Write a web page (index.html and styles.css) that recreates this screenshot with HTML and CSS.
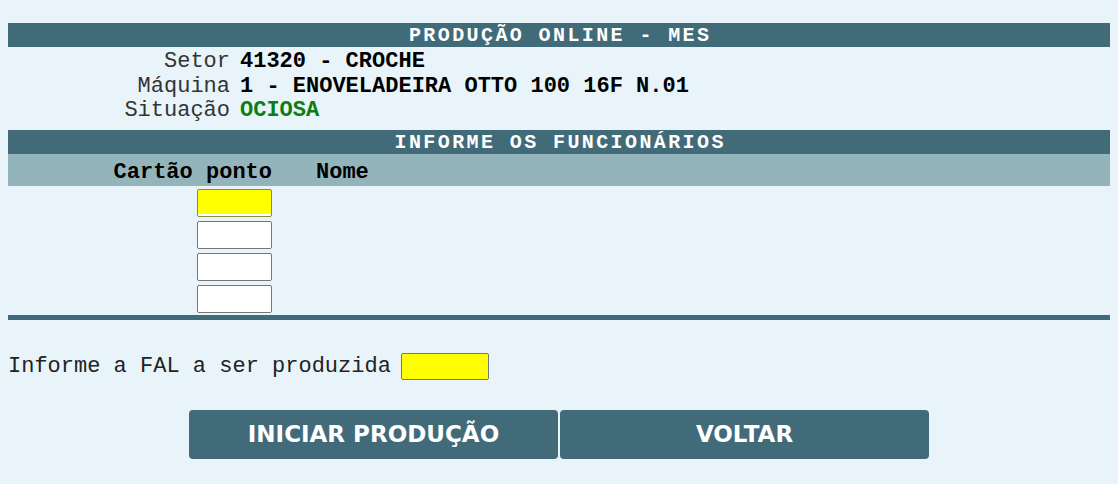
FILE: index.html
```html
<!DOCTYPE html>
<html lang="pt-BR">
<head>
<meta charset="utf-8">
<title>Produção Online - MES</title>
<link rel="stylesheet" href="styles.css">
</head>
<body>
<div class="page">
  <div class="bar">PRODUÇÃO ONLINE - MES</div>
  <div class="info">
    <div class="label">Setor</div><div class="value">41320 - CROCHE</div>
    <div class="label">Máquina</div><div class="value">1 - ENOVELADEIRA OTTO 100 16F N.01</div>
    <div class="label">Situação</div><div class="value status">OCIOSA</div>
  </div>
  <div class="bar bar-second">INFORME OS FUNCIONÁRIOS</div>
  <div class="colhead">
    <div class="col-card">Cartão ponto</div>
    <div class="col-name">Nome</div>
  </div>
  <div class="employees">
    <input class="field field-card field-active" type="text">
    <input class="field field-card" type="text">
    <input class="field field-card" type="text">
    <input class="field field-card" type="text">
  </div>
  <div class="rule"></div>
  <div class="fal">
    <span class="fal-label">Informe a FAL a ser produzida</span>
    <input class="field field-fal" type="text">
  </div>
  <div class="actions">
    <button class="btn" type="button">INICIAR PRODUÇÃO</button>
    <button class="btn" type="button">VOLTAR</button>
  </div>
</div>
</body>
</html>
```
FILE: styles.css
```css
html, body {
  margin: 0;
  padding: 0;
}
body {
  background: #e8f4fa;
  margin: 8px;
  font-family: "Liberation Mono", "Courier New", monospace;
  font-size: 22px;
  color: #000;
}
.page {
  padding-top: 15px;
}
.bar {
  background: #426b7a;
  color: #fff;
  font-weight: bold;
  font-size: 20px;
  letter-spacing: 2.4px;
  padding-left: 2.4px;
  height: 24px;
  line-height: 25px;
  text-align: center;
}
.bar-second {
  margin-top: 6px;
}
.info {
  display: grid;
  grid-template-columns: 222px 1fr;
  column-gap: 10px;
  grid-auto-rows: 24.5px;
  line-height: 24.5px;
  padding-top: 3px;
}
.label {
  text-align: right;
  color: #333;
}
.value {
  font-weight: bold;
}
.status {
  color: #0b7d12;
}
.colhead {
  background: #94b4bb;
  height: 32px;
  box-sizing: border-box;
  padding-top: 5px;
  display: flex;
  align-items: center;
  font-weight: bold;
  line-height: 27px;
}
.col-card {
  width: 264px;
  text-align: right;
}
.col-name {
  margin-left: 44px;
}
.employees {
  width: 264px;
  display: flex;
  flex-direction: column;
  align-items: flex-end;
  gap: 4px;
  padding-top: 3px;
}
.field {
  box-sizing: border-box;
  border: 1px solid #767676;
  border-radius: 2px;
  background: #fff;
  margin: 0;
  padding: 0;
  font: inherit;
}
.field-card {
  width: 75px;
  height: 28px;
}
.field-active {
  background: #ffff00;
  border-color: #8a8a3a;
  box-shadow: inset 0 -2px 0 #fff;
}
.rule {
  margin-top: 2px;
  height: 5px;
  background: #426b7a;
}
.fal {
  display: flex;
  align-items: center;
  margin-top: 33px;
  height: 27px;
}
.fal-label {
  color: #222;
}
.field-fal {
  width: 88px;
  height: 27px;
  margin-left: 10px;
  background: #ffff00;
}
.actions {
  display: flex;
  justify-content: center;
  gap: 2px;
  margin-top: 30px;
}
.btn {
  width: 369px;
  height: 49px;
  border: none;
  border-radius: 4px;
  background: #426b7a;
  color: #fff;
  font-family: "DejaVu Sans", Verdana, sans-serif;
  font-weight: bold;
  font-size: 23px;
  padding: 0;
}
```
